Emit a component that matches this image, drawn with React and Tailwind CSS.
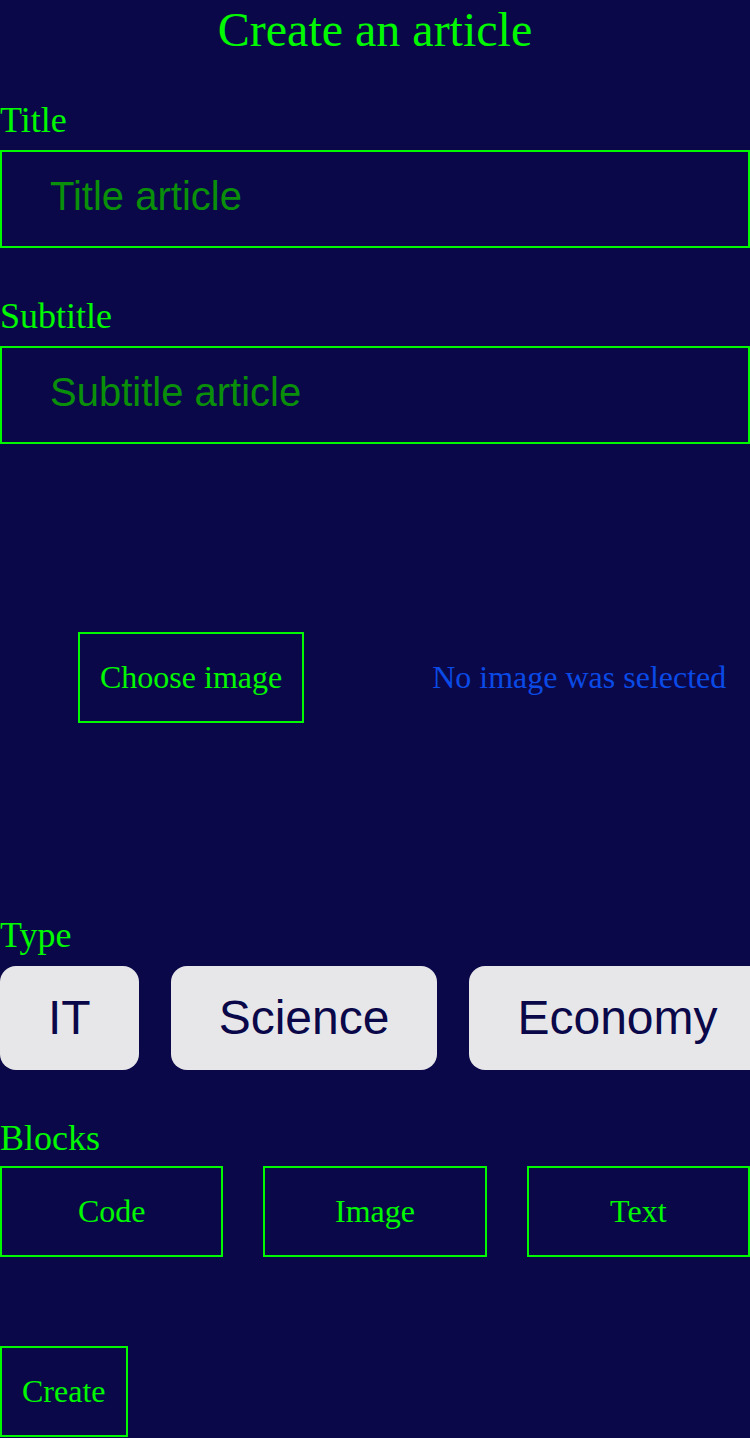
import { useState } from 'react';

const serif = "font-['Liberation_Serif','Times_New_Roman',serif]";
const sans = "font-['Liberation_Sans',Arial,sans-serif]";

export default function App() {
  const [type, setType] = useState('');
  const [title, setTitle] = useState('');
  const [subtitle, setSubtitle] = useState('');

  return (
    <div className={`min-h-[1438px] w-[750px] overflow-hidden bg-[#0a0849] text-[#00f800] ${serif}`}>
      <h1 className="text-center text-[48px] leading-[60px]">Create an article</h1>

      {/* Title */}
      <div className="mt-10">
        <label className="block text-[36px] leading-[41px]">Title</label>
        <input
          value={title}
          onChange={e => setTitle(e.target.value)}
          placeholder="Title article"
          className={`mt-[9px] block w-full border-2 border-[#00f800] bg-transparent pt-[21px] pb-[27px] pl-12 text-[40px] leading-[46px] text-[#00f800] outline-none placeholder:text-[#0a8f0a] ${sans}`}
        />
      </div>

      {/* Subtitle */}
      <div className="mt-12">
        <label className="block text-[36px] leading-[41px]">Subtitle</label>
        <input
          value={subtitle}
          onChange={e => setSubtitle(e.target.value)}
          placeholder="Subtitle article"
          className={`mt-[9px] block w-full border-2 border-[#00f800] bg-transparent pt-[21px] pb-[27px] pl-12 text-[40px] leading-[46px] text-[#00f800] outline-none placeholder:text-[#0a8f0a] ${sans}`}
        />
      </div>

      {/* Image picker */}
      <div className="flex h-[471px] items-center pb-1 pl-[78px]">
        <button className="border-2 border-[#00f800] px-5 py-[25px] text-[32px] leading-[37px]">
          Choose image
        </button>
        <span className="ml-[128px] text-[32px] leading-[37px] text-[#0a4ae6]">No image was selected</span>
      </div>

      {/* Type */}
      <div>
        <label className="block text-[36px] leading-[41px]">Type</label>
        <div className={`mt-[10px] flex gap-8 ${sans}`}>
          {['IT', 'Science', 'Economy'].map(t => (
            <button
              key={t}
              onClick={() => setType(t)}
              className={`shrink-0 rounded-2xl px-12 py-6 text-[48px] leading-[56px] text-[#0a0849] ${
                type === t ? 'bg-[#c9c9d0]' : 'bg-[#e7e7ea]'
              }`}
            >
              {t}
            </button>
          ))}
        </div>
      </div>

      {/* Blocks */}
      <div className="mt-[48px]">
        <label className="block text-[36px] leading-[41px]">Blocks</label>
        <div className="mt-[7px] grid grid-cols-3 gap-10">
          {['Code', 'Image', 'Text'].map(b => (
            <button key={b} className="h-[91px] border-2 border-[#00f800] text-[32px] leading-[37px]">
              {b}
            </button>
          ))}
        </div>
      </div>

      <button className="mt-[89px] h-[91px] border-2 border-[#00f800] px-5 text-[32px] leading-[37px]">
        Create
      </button>
    </div>
  );
}
